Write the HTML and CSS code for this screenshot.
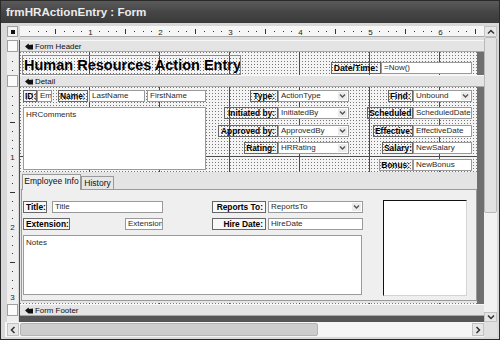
FILE: index.html
```html
<!DOCTYPE html>
<html>
<head>
	<title>frmHRActionEntry : Form</title>
	<link rel="stylesheet" href="styles.css">
</head>
<body>
	<div class="window">
		<div class="titlebar">frmHRActionEntry : Form</div>
		<div class="client">
			<div class="corner"><span></span></div>
			<div class="hruler">
				<svg width="464" height="11" viewBox="0 0 464 11">
					<defs>
						<pattern id="hticks" width="70" height="11" patternUnits="userSpaceOnUse">
							<rect x="9" y="5" width="1" height="1" fill="#333"/>
							<rect x="18" y="5" width="1" height="1" fill="#333"/>
							<rect x="26" y="5" width="1" height="1" fill="#333"/>
							<rect x="35" y="3" width="1" height="5" fill="#333"/>
							<rect x="44" y="5" width="1" height="1" fill="#333"/>
							<rect x="53" y="5" width="1" height="1" fill="#333"/>
							<rect x="61" y="5" width="1" height="1" fill="#333"/>
						</pattern>
					</defs>
					<rect width="464" height="11" fill="#f6f6f6"/>
					<rect width="464" height="11" fill="url(#hticks)"/>
					<rect y="10" width="464" height="1" fill="#a8a8a8"/>
					<g class="rnum" text-anchor="middle">
						<text x="70.5" y="8.5">1</text>
						<text x="140.5" y="8.5">2</text>
						<text x="210.5" y="8.5">3</text>
						<text x="280.5" y="8.5">4</text>
						<text x="350.5" y="8.5">5</text>
						<text x="420.5" y="8.5">6</text>
					</g>
				</svg>
			</div>
			<div class="vscroll">
				<div class="sbtn"><svg width="8" height="6" viewBox="0 0 8 6"><path d="M1 4.5 L4 1.5 L7 4.5" fill="none" stroke="#333" stroke-width="1.5"/></svg></div>
				<div class="vthumb"></div>
				<div class="vtrack"></div>
				<div class="sbtn sbtn-low"><svg width="8" height="6" viewBox="0 0 8 6"><path d="M1 1.5 L4 4.5 L7 1.5" fill="none" stroke="#333" stroke-width="1.5"/></svg></div>
			</div>
			<div class="vruler">
				<svg width="15" height="285" viewBox="0 0 15 285">
					<defs>
						<pattern id="vticks" y="50" width="15" height="70" patternUnits="userSpaceOnUse">
							<rect x="7" y="9" width="1" height="1" fill="#333"/>
							<rect x="7" y="18" width="1" height="1" fill="#333"/>
							<rect x="7" y="26" width="1" height="1" fill="#333"/>
							<rect x="5" y="35" width="5" height="1" fill="#333"/>
							<rect x="7" y="44" width="1" height="1" fill="#333"/>
							<rect x="7" y="53" width="1" height="1" fill="#333"/>
							<rect x="7" y="61" width="1" height="1" fill="#333"/>
						</pattern>
					</defs>
					<rect x="2" width="11" height="285" fill="#efefef"/>
					<rect x="2" y="50" width="11" height="217" fill="url(#vticks)"/>
					<rect x="7" y="24" width="1" height="1" fill="#333"/>
					<rect x="7" y="33" width="1" height="1" fill="#333"/>
					<rect x="2.5" y="3.5" width="10" height="11" fill="#fbfbfb" stroke="#a0a0a0"/>
					<rect x="2.5" y="38.5" width="10" height="11" fill="#fbfbfb" stroke="#a0a0a0"/>
					<rect x="2.5" y="267.5" width="10" height="11" fill="#fbfbfb" stroke="#a0a0a0"/>
					<g class="rnum" text-anchor="middle">
						<text x="7.5" y="123">1</text>
						<text x="7.5" y="193">2</text>
						<text x="7.5" y="263">3</text>
					</g>
					<rect x="14" y="3" width="1" height="282" fill="#505050"/>
				</svg>
			</div>
			<div class="design">
				<div class="bar"><svg class="hand" width="8" height="7" viewBox="0 0 8 7"><path d="M0 3.5 L3.5 0.5 L4 2 L8 1.5 L8 6.5 L3.5 6.5 Z" fill="#111"/></svg>Form Header</div>
				<div class="section sec-header">
					<div class="grid">
						<div class="lbl h-title">Human Resources Action Entry</div>
						<div class="lbl h-datel">Date/Time:</div>
						<div class="txt h-date">=Now()</div>
					</div>
					<div class="beyond"></div>
				</div>
				<div class="bar"><svg class="hand" width="8" height="7" viewBox="0 0 8 7"><path d="M0 3.5 L3.5 0.5 L4 2 L8 1.5 L8 6.5 L3.5 6.5 Z" fill="#111"/></svg>Detail</div>
				<div class="section sec-detail">
					<div class="grid">
						<div class="lbl r1 d-idl">ID:</div>
						<div class="txt r1 d-id">Emp</div>
						<div class="lbl r1 d-namel">Name:</div>
						<div class="txt r1 d-last">LastName</div>
						<div class="txt r1 d-first">FirstName</div>
						<div class="txt memo d-comments">HRComments</div>

						<div class="lbl r1 d-typel">Type:</div>
						<div class="txt r1 d-mid">ActionType<svg class="dd" width="9" height="8" viewBox="0 0 9 8"><path d="M2 2.5 L4.5 5 L7 2.5" fill="none" stroke="#555" stroke-width="1.4"/></svg></div>
						<div class="lbl r2 d-initl">Initiated by:</div>
						<div class="txt r2 d-mid">InitiatedBy<svg class="dd" width="9" height="8" viewBox="0 0 9 8"><path d="M2 2.5 L4.5 5 L7 2.5" fill="none" stroke="#555" stroke-width="1.4"/></svg></div>
						<div class="lbl r3 d-apprl">Approved by:</div>
						<div class="txt r3 d-mid">ApprovedBy<svg class="dd" width="9" height="8" viewBox="0 0 9 8"><path d="M2 2.5 L4.5 5 L7 2.5" fill="none" stroke="#555" stroke-width="1.4"/></svg></div>
						<div class="lbl r4 d-ratel">Rating:</div>
						<div class="txt r4 d-mid">HRRating<svg class="dd" width="9" height="8" viewBox="0 0 9 8"><path d="M2 2.5 L4.5 5 L7 2.5" fill="none" stroke="#555" stroke-width="1.4"/></svg></div>

						<div class="lbl r1 d-findl">Find:</div>
						<div class="txt r1 d-right">Unbound<svg class="dd" width="9" height="8" viewBox="0 0 9 8"><path d="M2 2.5 L4.5 5 L7 2.5" fill="none" stroke="#555" stroke-width="1.4"/></svg></div>
						<div class="lbl r2 d-schedl">Scheduled:</div>
						<div class="txt r2 d-right">ScheduledDate</div>
						<div class="lbl r3 d-effl">Effective:</div>
						<div class="txt r3 d-right">EffectiveDate</div>
						<div class="lbl r4 d-sall">Salary:</div>
						<div class="txt r4 d-right">NewSalary</div>
						<div class="lbl r5 d-bonl">Bonus:</div>
						<div class="txt r5 d-right">NewBonus</div>

						<div class="tabctl">
							<div class="tab tab-on">Employee Info</div>
							<div class="tab tab-off">History</div>
							<div class="tabpage">
								<div class="lbl p-titlel">Title:</div>
								<div class="txt p-title">Title</div>
								<div class="lbl p-extl">Extension:</div>
								<div class="txt p-ext">Extension</div>
								<div class="lbl p-repl">Reports To:</div>
								<div class="txt p-rep">ReportsTo<svg class="dd" width="9" height="8" viewBox="0 0 9 8"><path d="M2 2.5 L4.5 5 L7 2.5" fill="none" stroke="#555" stroke-width="1.4"/></svg></div>
								<div class="lbl p-hirel">Hire Date:</div>
								<div class="txt p-hire">HireDate</div>
								<div class="txt memo p-notes">Notes</div>
								<div class="p-image"></div>
							</div>
						</div>
					</div>
					<div class="beyond"></div>
				</div>
				<div class="bar"><svg class="hand" width="8" height="7" viewBox="0 0 8 7"><path d="M0 3.5 L3.5 0.5 L4 2 L8 1.5 L8 6.5 L3.5 6.5 Z" fill="#111"/></svg>Form Footer</div>
				<div class="void"></div>
			</div>
			<div class="hscroll">
				<div class="sbtn hbtn-left"><svg width="6" height="8" viewBox="0 0 6 8"><path d="M4.5 1 L1.5 4 L4.5 7" fill="none" stroke="#333" stroke-width="1.5"/></svg></div>
				<div class="hthumb"></div>
				<div class="htrack"></div>
				<div class="sbtn hbtn-right"><svg width="6" height="8" viewBox="0 0 6 8"><path d="M1.5 1 L4.5 4 L1.5 7" fill="none" stroke="#333" stroke-width="1.5"/></svg></div>
			</div>
			<div class="sizer"></div>
		</div>
	</div>
</body>
</html>
```

FILE: styles.css
```css
* {
	box-sizing: border-box;
}
body {
	margin: 0;
	font-family: "Liberation Sans", Arial, sans-serif;
	font-size: 8px;
	color: #111;
}
.window {
	width: 500px;
	height: 340px;
	display: flex;
	flex-direction: column;
	background: #d2d2d2;
	border: 1px solid #2a2a2a;
	overflow: hidden;
}
.titlebar {
	height: 22px;
	line-height: 22px;
	padding-left: 5px;
	background: linear-gradient(#5a5a5a, #444 55%, #3a3a3a);
	color: #ececec;
	font-weight: bold;
	font-size: 11.6px;
}
.client {
	flex: 1;
	display: grid;
	grid-template-columns: 15px 464px 13px;
	grid-template-rows: 11px 285px 15px;
	padding: 3px 2px 2px 4px;
	background: #d8d8d8;
}
.rnum text {
	font-family: "Liberation Sans", Arial, sans-serif;
	font-size: 8px;
	fill: #222;
}

/* rulers */
.corner {
	grid-column: 1;
	grid-row: 1;
	padding-left: 2px;
}
.corner span {
	display: flex;
	align-items: center;
	justify-content: center;
	width: 11px;
	height: 11px;
	background: #f2f2f2;
	border: 1px solid #a0a0a0;
}
.corner span::after {
	content: '';
	width: 4px;
	height: 4px;
	background: #111;
}
.hruler {
	grid-column: 2;
	grid-row: 1;
}
.hruler svg, .vruler svg {
	display: block;
}
.vruler {
	grid-column: 1;
	grid-row: 2;
}

/* design surface */
.design {
	grid-column: 2;
	grid-row: 2;
	display: flex;
	flex-direction: column;
	padding-top: 3px;
	background: #dedede;
}
.bar {
	flex: 0 0 12px;
	display: flex;
	align-items: center;
	gap: 2px;
	padding-left: 5px;
	background: #e4e4e4;
	border-top: 1px solid #f8f8f8;
	border-bottom: 1px solid #a8a8a8;
	font-size: 7.9px;
	color: #111;
}
.section {
	display: flex;
}
.sec-header {
	flex: 0 0 23px;
}
.sec-detail {
	flex: 0 0 217px;
}
.grid {
	position: relative;
	width: 457px;
	background-color: #f4f4f4;
	background-image:
		repeating-linear-gradient(90deg, transparent 0 69px, #4a4a4a 69px 70px),
		repeating-linear-gradient(180deg, transparent 0 69px, #4a4a4a 69px 70px),
		linear-gradient(180deg, transparent 1px, #f4f4f4 1px),
		linear-gradient(90deg, #777 1px, transparent 1px);
	background-size: auto, auto, 3px 3px, 3px 3px;
}
.beyond {
	flex: 1;
	background: #6f6f6f;
}
.void {
	flex: 1;
	background: #555;
}

/* controls */
.lbl, .txt {
	position: absolute;
	height: 12px;
	line-height: 10px;
	white-space: nowrap;
	overflow: hidden;
}
.lbl {
	border: 1px solid #666;
	font-weight: bold;
	font-size: 8.4px;
	text-align: right;
	padding: 0 2px 0 1px;
	color: #000;
}
.txt {
	border: 1px solid #9a9a9a;
	background: #fff;
	font-size: 8px;
	padding-left: 2px;
	color: #2a2a2a;
}
.txt .dd {
	position: absolute;
	right: 1px;
	top: 1px;
	background: #ececec;
}
.memo {
	line-height: 11px;
	padding-top: 1px;
}

.r1 { top: 3px; }
.r2 { top: 20px; }
.r3 { top: 38px; }
.r4 { top: 55px; }
.r5 { top: 72px; }

.h-title {
	left: 2px;
	top: 3px;
	width: 219px;
	height: 20px;
	font-size: 14.5px;
	line-height: 18px;
	text-align: left;
	padding-left: 1px;
	border-color: #8a8a8a;
}
.h-datel {
	left: 311px;
	top: 10px;
	width: 50px;
	font-size: 8.7px;
}
.h-date {
	left: 361px;
	top: 10px;
	width: 91px;
}

.d-idl { left: 3px; width: 14px; text-align: left; padding-left: 1px; }
.d-id { left: 17px; width: 15px; }
.d-namel { left: 38px; width: 30px; }
.d-last { left: 69px; width: 56px; }
.d-first { left: 127px; width: 59px; }
.d-comments { left: 3px; top: 20px; width: 183px; height: 63px; }
.d-typel { left: 230px; width: 28px; }
.d-initl { left: 204px; width: 54px; }
.d-apprl { left: 198px; width: 60px; }
.d-ratel { left: 224px; width: 34px; }
.d-mid { left: 258px; width: 71px; }
.d-findl { left: 368px; width: 25px; }
.d-schedl { left: 347px; width: 46px; padding-right: 1px; }
.d-effl { left: 353px; width: 40px; }
.d-sall { left: 362px; width: 31px; }
.d-bonl { left: 359px; width: 34px; border-color: #999; }
.d-right { left: 393px; width: 59px; }

/* tab control */
.tabctl {
	position: absolute;
	left: 0;
	top: 85px;
	width: 457px;
	height: 131px;
	background: #e4e4e4;
}
.tab {
	position: absolute;
	border: 1px solid #9a9a9a;
	border-bottom: none;
	font-size: 8.5px;
	line-height: 12px;
	text-align: center;
	color: #111;
}
.tab-on {
	left: 2px;
	top: 2px;
	width: 59px;
	height: 16px;
	background: #f0f0f0;
	z-index: 1;
}
.tab-off {
	left: 61px;
	top: 4px;
	width: 33px;
	height: 13px;
	background: #e6e6e6;
}
.tabpage {
	position: absolute;
	left: 1px;
	top: 17px;
	right: 0;
	bottom: 2px;
	border: 1px solid #9a9a9a;
	background: #efefef;
}
.tabpage .lbl {
	background: #f8f8f8;
}
.p-titlel { left: 1px; top: 11px; width: 24px; text-align: left; padding-left: 2px; }
.p-title { left: 30px; top: 11px; width: 111px; }
.p-extl { left: 1px; top: 28px; width: 47px; text-align: left; padding-left: 2px; }
.p-ext { left: 103px; top: 28px; width: 38px; }
.p-repl { left: 190px; top: 11px; width: 54px; }
.p-rep { left: 246px; top: 11px; width: 95px; }
.p-hirel { left: 190px; top: 28px; width: 54px; }
.p-hire { left: 246px; top: 28px; width: 95px; }
.p-notes { left: 1px; top: 45px; width: 339px; height: 60px; }
.p-image {
	position: absolute;
	left: 361px;
	top: 10px;
	width: 84px;
	height: 96px;
	background: #fff;
	border-top: 1px solid #111;
	border-left: 1px solid #111;
	border-right: 1px solid #d4d4d4;
	border-bottom: 1px solid #d4d4d4;
}

/* scrollbars */
.vscroll {
	grid-column: 3;
	grid-row: 1 / 3;
	display: flex;
	flex-direction: column;
	background: #f2f2f2;
}
.sbtn {
	display: flex;
	align-items: center;
	justify-content: center;
	background: #e6e6e6;
	border: 1px solid #c2c2c2;
}
.vscroll .sbtn {
	flex: 0 0 11px;
}
.vscroll .sbtn-low {
	flex-basis: 10px;
}
.vthumb {
	flex: 0 0 176px;
	background: #e2e2e2;
	border: 1px solid #b8b8b8;
	border-radius: 2px;
}
.vtrack {
	flex: 1;
}
.hscroll {
	grid-column: 1 / 3;
	grid-row: 3;
	display: flex;
	padding: 1px 0;
	background: #f6f6f6;
}
.hbtn-left {
	flex: 0 0 12px;
	margin-left: 2px;
	margin-right: 1px;
}
.hbtn-right {
	flex: 0 0 12px;
}
.hthumb {
	flex: 0 0 298px;
	background: #cdcdcd;
	border: 1px solid #b4b4b4;
	border-radius: 2px;
}
.htrack {
	flex: 1;
}
.sizer {
	grid-column: 3;
	grid-row: 3;
	background: #e0e0e0;
}
```
